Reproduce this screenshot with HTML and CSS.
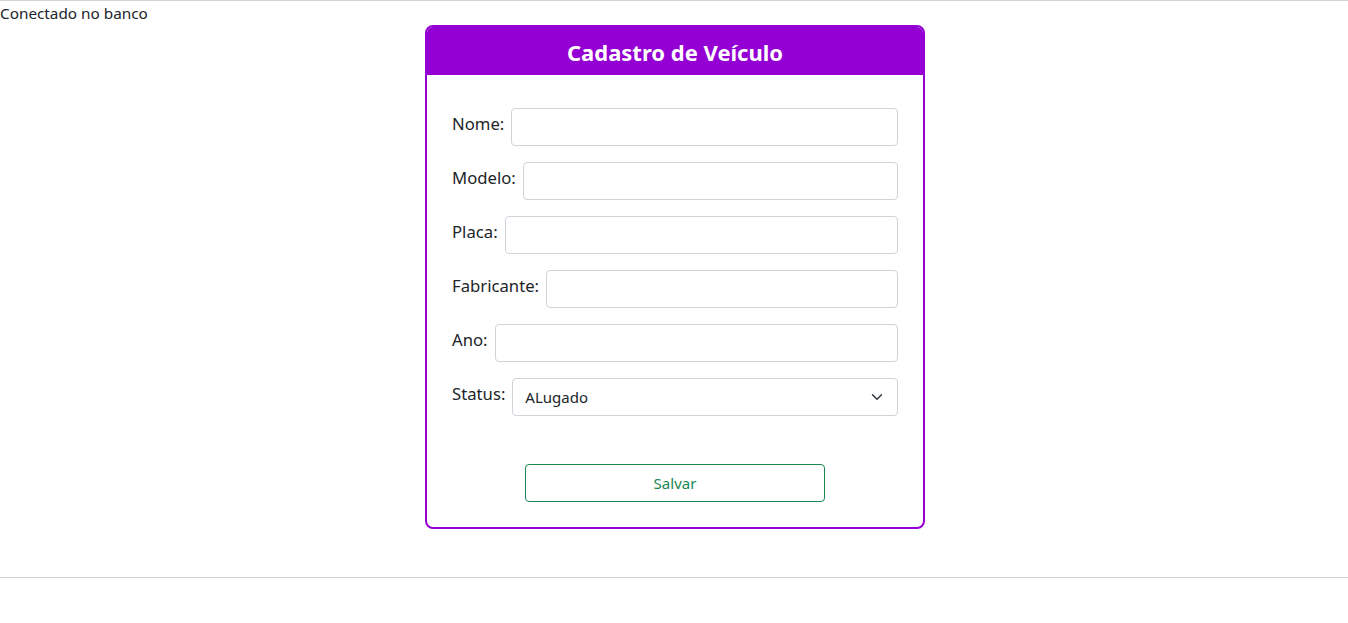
FILE: index.html
```html
<!DOCTYPE html>
<html lang="pt-BR">
<head>
<meta charset="utf-8">
<title>Cadastro de Veículo</title>
<link rel="stylesheet" href="styles.css">
</head>
<body>
<hr class="rule rule-top">
<div class="status-msg">Conectado no banco</div>
<main class="page">
  <form class="card">
    <h1 class="card-title">Cadastro de Veículo</h1>
    <div class="card-body">
      <div class="field"><label class="field-label">Nome:</label><input class="field-input" type="text"></div>
      <div class="field"><label class="field-label">Modelo:</label><input class="field-input" type="text"></div>
      <div class="field"><label class="field-label">Placa:</label><input class="field-input" type="text"></div>
      <div class="field"><label class="field-label">Fabricante:</label><input class="field-input" type="text"></div>
      <div class="field"><label class="field-label">Ano:</label><input class="field-input" type="text"></div>
      <div class="field"><label class="field-label">Status:</label>
        <div class="select-wrap">
          <select class="field-input field-select"><option>ALugado</option><option>Disponível</option></select>
          <svg class="chev" viewBox="0 0 16 16"><path d="M2 5l6 6 6-6" fill="none" stroke="#343a40" stroke-width="2" stroke-linecap="round" stroke-linejoin="round"/></svg>
        </div>
      </div>
      <div class="actions"><button class="btn-save" type="button">Salvar</button></div>
    </div>
  </form>
</main>
<hr class="rule rule-bottom">
</body>
</html>
```
FILE: styles.css
```css
* { box-sizing: border-box; }
html, body { margin: 0; padding: 0; background: #fff; }
body {
  font-family: "Noto Sans", "Open Sans", sans-serif;
  color: #212529;
  font-size: 15.3px;
  line-height: 24px;
}
.rule { border: 0; border-top: 1px solid #d4d4d4; margin: 0; }
.status-msg { height: 24px; }
.page { display: flex; justify-content: center; padding-left: 2px; padding-bottom: 48px; }
.card {
  width: 500px;
  border: 2px solid #9400d3;
  border-radius: 8px;
  overflow: hidden;
  background: #fff;
}
.card-title {
  margin: 0;
  background: #9400d3;
  color: #fff;
  height: 48px;
  line-height: 50px;
  text-align: center;
  font-size: 22px;
  font-weight: 700;
}
.card-body { padding: 33px 25px 25px 25px; }
.field { display: flex; align-items: flex-start; gap: 7px; margin-bottom: 16px; }
.field-label { font-size: 16.7px; line-height: 24px; padding-top: 4px; white-space: nowrap; }
.field-input {
  flex: 1;
  height: 38px;
  border: 1px solid #ced4da;
  border-radius: 4px;
  font: inherit;
  font-size: 15px;
  padding: 6px 12px;
  color: #212529;
  background: #fff;
  min-width: 0;
}
.select-wrap { flex: 1; position: relative; display: flex; }
.field-select { appearance: none; -webkit-appearance: none; width: 100%; }
.chev { position: absolute; right: 15px; top: 13px; pointer-events: none; width: 12px; height: 12px; }
.actions { display: flex; justify-content: center; padding-top: 32px; }
.btn-save {
  width: 300px;
  height: 38px;
  border: 1px solid #198754;
  border-radius: 4px;
  background: #fff;
  color: #198754;
  font: inherit;
  font-size: 15px;
}
```
